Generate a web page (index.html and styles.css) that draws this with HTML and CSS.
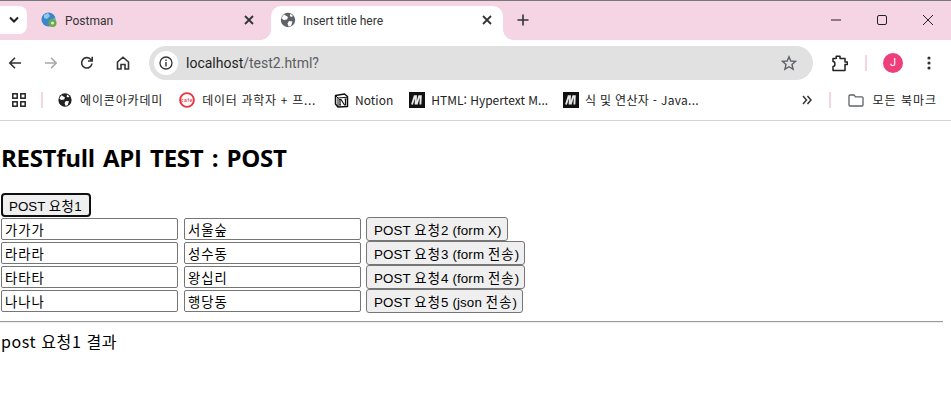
FILE: index.html
```html
<!DOCTYPE html>
<html lang="ko">
<head>
<meta charset="utf-8">
<title>Insert title here</title>
<link rel="stylesheet" href="styles.css">
</head>
<body>
<header class="browser">
  <div class="tabstrip">
    <button class="tabsearch" aria-label="tabs"><svg width="12" height="8" viewBox="0 0 12 8"><path d="M2 1.5 6 5.5 10 1.5" fill="none" stroke="#1f1f1f" stroke-width="2"/></svg></button>
    <div class="tab tab-idle">
      <svg class="favicon" width="16" height="16" viewBox="0 0 16 16"><circle cx="7.5" cy="7.5" r="7" fill="#3b86c9"/><path d="M3 3 7 1 9 4 6 7 3 6ZM10 8 14 6 15 9 12 13 9 12Z" fill="#8fc6ea"/><circle cx="11.5" cy="11" r="4" fill="#6aa84f"/><circle cx="11.5" cy="11" r="1.6" fill="#d9ecc6"/></svg>
      <span class="tab-title">Postman</span>
      <svg class="tab-x" width="10" height="10" viewBox="0 0 10 10"><path d="M1 1 9 9M9 1 1 9" stroke="#333" stroke-width="1.8"/></svg>
    </div>
    <div class="tab tab-active">
      <svg class="favicon" width="16" height="16" viewBox="0 0 16 16"><circle cx="8" cy="8" r="7.2" fill="#5f6368"/><path d="M4 2.5 8 5 7 7.5 3.5 8 1.5 6ZM9 9 12.5 9.5 11 14 8.5 14.5 7.5 11.5ZM10.5 1.8 13 4 11.5 5 9.8 4Z" fill="#fff"/></svg>
      <span class="tab-title">Insert title here</span>
      <svg class="tab-x" width="10" height="10" viewBox="0 0 10 10"><path d="M1 1 9 9M9 1 1 9" stroke="#333" stroke-width="1.8"/></svg>
    </div>
    <svg class="newtab" width="12" height="12" viewBox="0 0 12 12"><path d="M6 0.5V11.5M0.5 6H11.5" stroke="#333" stroke-width="1.6"/></svg>
    <div class="winctl">
      <svg width="12" height="12" viewBox="0 0 12 12"><path d="M1 6H11" stroke="#222" stroke-width="1"/></svg>
      <svg width="12" height="12" viewBox="0 0 12 12"><rect x="1.5" y="1.5" width="9" height="9" rx="1.5" fill="none" stroke="#222"/></svg>
      <svg width="12" height="12" viewBox="0 0 12 12"><path d="M1 1 11 11M11 1 1 11" stroke="#222"/></svg>
    </div>
  </div>
  <div class="toolbar">
    <div class="navbtns">
      <svg width="16" height="16" viewBox="0 0 16 16"><path d="M14 8H3M8 2.8 2.8 8 8 13.2" fill="none" stroke="#333" stroke-width="1.6"/></svg>
      <svg width="16" height="16" viewBox="0 0 16 16"><path d="M2 8H13M8 2.8 13.2 8 8 13.2" fill="none" stroke="#a8a8a8" stroke-width="1.6"/></svg>
      <svg width="16" height="16" viewBox="0 0 16 16"><path d="M13 8.5A5.2 5.2 0 1 1 11.6 4.2L13 5.6M13.2 1.8V6H9" fill="none" stroke="#333" stroke-width="1.6"/></svg>
      <svg width="16" height="16" viewBox="0 0 16 16"><path d="M2.5 7 8 2.2 13.5 7V14H10V9.5H6V14H2.5Z" fill="none" stroke="#333" stroke-width="1.6"/></svg>
    </div>
    <div class="omnibox">
      <span class="info"><svg width="14" height="14" viewBox="0 0 14 14"><circle cx="7" cy="7" r="6" fill="none" stroke="#333" stroke-width="1.3"/><path d="M7 6V10.5M7 3.4V5" stroke="#333" stroke-width="1.4"/></svg></span>
      <span class="url">localhost<span class="url-path">/test2.html?</span></span>
      <svg class="star" width="16" height="16" viewBox="0 0 16 16"><path d="M8 1.8 9.8 6 14.6 6.4 11 9.5 12.1 14.2 8 11.7 3.9 14.2 5 9.5 1.4 6.4 6.2 6Z" fill="none" stroke="#5f6368" stroke-width="1.4"/></svg>
    </div>
    <div class="toolright">
      <svg class="ext" width="16" height="17" viewBox="0 0 16 17"><path d="M1 3.5H4.2V1.2H8V3.5H13V7H15.5V9.5H13V15.5H1V11.5C3.6 11.5 3.6 6.5 1 6.5Z" fill="none" stroke="#222" stroke-width="1.5" stroke-linejoin="round"/></svg>
      <span class="sep sep-tool"></span>
      <span class="avatar">J</span>
      <svg class="dots" width="4" height="14" viewBox="0 0 4 14"><circle cx="2" cy="2" r="1.6" fill="#333"/><circle cx="2" cy="7" r="1.6" fill="#333"/><circle cx="2" cy="12" r="1.6" fill="#333"/></svg>
    </div>
  </div>
  <nav class="bookmarks">
    <svg class="apps" width="14" height="14" viewBox="0 0 14 14"><g fill="none" stroke="#222" stroke-width="1.5"><rect x=".8" y=".8" width="4.4" height="4.4"/><rect x="8.8" y=".8" width="4.4" height="4.4"/><rect x=".8" y="8.8" width="4.4" height="4.4"/><rect x="8.8" y="8.8" width="4.4" height="4.4"/></g></svg>
    <span class="sep sep-apps"></span>
    <span class="bm bm-1"><svg width="14" height="14" viewBox="0 0 16 16"><circle cx="8" cy="8" r="7.6" fill="#222"/><path d="M4 2.5 8 5 7 7.5 3.5 8 1.5 6ZM9 9 12.5 9.5 11 14 8.5 14.5 7.5 11.5ZM10.5 1.8 13 4 11.5 5 9.8 4Z" fill="#fff"/></svg>에이콘아카데미</span>
    <span class="bm bm-2"><svg width="16" height="16" viewBox="0 0 16 16"><circle cx="8" cy="8" r="6.9" fill="#fff" stroke="#e8343f" stroke-width="1.9"/><text class="cafe-mark" x="8" y="9.6" text-anchor="middle">cafe</text></svg>데이터 과학자 + 프...</span>
    <span class="bm bm-3"><svg width="15" height="15" viewBox="0 0 15 15"><path d="M1.5 2.5 10.5 1 13.5 3.5V13.5L4 14 1.5 11Z" fill="#fff" stroke="#111" stroke-width="1.5" stroke-linejoin="round"/><path d="M1.5 2.5 4 5 13.5 4.2M4 5V14" fill="none" stroke="#111" stroke-width="1"/><path d="M6 6.5V12M6 6.5H7L10.5 12H11.5V6M5 12H7M5 6.5H7M10.5 6H12.5" fill="none" stroke="#111" stroke-width="1.2"/></svg>Notion</span>
    <span class="bm bm-4"><span class="mdn"><svg width="16" height="16" viewBox="0 0 16 16"><rect width="16" height="16" fill="#111"/><path d="M3 12.5 5.6 4.2H7L6.6 12.5M7.6 12.5 10.2 4.2H11.8L11.4 12.5" fill="none" stroke="#e8e8e8" stroke-width="1.9"/></svg></span>HTML: Hypertext M...</span>
    <span class="bm bm-5"><span class="mdn"><svg width="16" height="16" viewBox="0 0 16 16"><rect width="16" height="16" fill="#111"/><path d="M3 12.5 5.6 4.2H7L6.6 12.5M7.6 12.5 10.2 4.2H11.8L11.4 12.5" fill="none" stroke="#e8e8e8" stroke-width="1.9"/></svg></span><span class="ko-mid">식 및 연산자 - Java...</span></span>
    <svg class="more" width="10" height="10" viewBox="0 0 10 10"><path d="M1 1 4.5 5 1 9M5.5 1 9 5 5.5 9" fill="none" stroke="#333" stroke-width="1.5"/></svg>
    <span class="sep sep-more"></span>
    <span class="bm bm-all"><svg width="16" height="13" viewBox="0 0 16 13"><path d="M1 2A1 1 0 0 1 2 1H6L7.5 2.8H14A1 1 0 0 1 15 3.8V11A1 1 0 0 1 14 12H2A1 1 0 0 1 1 11Z" fill="none" stroke="#5f6368" stroke-width="1.3"/></svg>모든 북마크</span>
  </nav>
</header>
<main class="page">
  <h1 class="title">RESTfull API TEST : POST</h1>
  <button class="btn btn-focus">POST <span class="ko">요청</span>1</button>
  <form class="row"><input class="field" value="가가가"><input class="field" value="서울숲"><button type="button" class="btn">POST <span class="ko">요청</span>2 (form X)</button></form>
  <form class="row"><input class="field" value="라라라"><input class="field" value="성수동"><button type="button" class="btn">POST <span class="ko">요청</span>3 (form <span class="ko">전송</span>)</button></form>
  <form class="row"><input class="field" value="타타타"><input class="field" value="왕십리"><button type="button" class="btn">POST <span class="ko">요청</span>4 (form <span class="ko">전송</span>)</button></form>
  <form class="row"><input class="field" value="나나나"><input class="field" value="행당동"><button type="button" class="btn">POST <span class="ko">요청</span>5 (json <span class="ko">전송</span>)</button></form>
  <hr class="rule">
  <div class="result">post 요청1 결과</div>
</main>
</body>
</html>
```
FILE: styles.css
```css
* { box-sizing: border-box; }
html, body { margin: 0; height: 100%; background: #fff; overflow: hidden; }
body { font-family: "Noto Sans CJK KR", "Noto Sans", sans-serif; color: #000; }
svg { display: block; flex: none; }

.browser { border-bottom: 1px solid #d3d3d3; height: 121px; }
.tabstrip { height: 40px; background: #f5d5e4; border-top: 1px solid #777; padding-top: 5px; display: flex; align-items: flex-start; position: relative; }
.tabsearch { width: 27px; height: 28px; margin: 0; padding: 0; border: 0; background: #fff; border-radius: 0 8px 8px 0; display: flex; align-items: center; justify-content: center; }
.tab { display: flex; align-items: center; font: 12px "Roboto", "Open Sans", sans-serif; color: #333; }
.tab-idle { width: 217px; margin-left: 14px; height: 28px; padding-right: 4px; }
.tab-active { width: 232px; height: 34px; margin-left: 13px; padding: 0 11px 6px 9px; background: #fff; border-radius: 10px 10px 0 0; position: relative; }
.tab-active::before, .tab-active::after { content: ""; position: absolute; bottom: 0; width: 10px; height: 10px; }
.tab-active::before { left: -10px; background: radial-gradient(circle at 0 0, #f5d5e4 9.5px, #fff 10px); }
.tab-active::after { right: -10px; background: radial-gradient(circle at 100% 0, #f5d5e4 9.5px, #fff 10px); }
.tab-title { margin-left: 8px; flex: 1; padding-top: 2px; }
.tab-active .tab-title { margin-left: 7px; }
.newtab { margin: 8px 0 0 14px; }
.winctl { margin: 8px 0 0 auto; display: flex; gap: 34px; padding-right: 17px; }

.toolbar { height: 40px; display: flex; align-items: flex-end; background: #fff; border-radius: 0 10px 0 0; padding-top: 6px; position: relative; margin-top: 0; }
.navbtns { display: flex; gap: 20px; padding-left: 7px; height: 34px; align-items: center; }
.omnibox { width: 664px; height: 34px; margin-left: 18px; background: #e1e1e1; border-radius: 17px; display: flex; align-items: center; padding: 0 16px 0 5px; }
.info { width: 24px; height: 24px; border-radius: 50%; background: #fff; display: flex; align-items: center; justify-content: center; }
.url { margin-left: 8px; flex: 1; font: 14px "Roboto", "Liberation Sans", sans-serif; color: #1f1f1f; }
.url-path { color: #5b5e62; }
.toolright { height: 34px; display: flex; align-items: center; padding-left: 19px; }
.sep { width: 2px; background: #f5d5e4; flex: none; height: 16px; }
.sep-tool { margin-left: 17px; }
.avatar { width: 20px; height: 20px; margin-left: 16px; border-radius: 50%; background: #ee3f7c; color: #fff; font: 11px/20px "Roboto", sans-serif; text-align: center; }
.dots { margin-left: 24px; }

.bookmarks { height: 40px; display: flex; align-items: center; font-size: 12px; color: #222; padding-left: 12px; }
.bm { display: flex; align-items: center; gap: 8px; white-space: nowrap; line-height: 16px; font-family: "Noto Sans CJK KR", sans-serif; }
.mdn { display: block; }
.cafe-mark { font: 700 4.5px "Liberation Sans", sans-serif; fill: #e8343f; }
.sep-apps { margin-left: 15px; }
.bm-1 { margin-left: 15px; letter-spacing: .85px; }
.bm-2 { margin-left: 16px; gap: 7px; letter-spacing: .7px; }
.bm-3 { margin-left: 18px; gap: 6px; }
.bm-4 { margin-left: 16px; gap: 6px; }
.bm-5 { margin-left: 15px; gap: 6px; }
.ko-mid { letter-spacing: .3px; }
.more { margin-left: auto; }
.sep-more { margin-left: 17px; }
.bm-all { margin-left: 17px; margin-right: 14px; letter-spacing: 1px; }

.page { padding: 0 8px 0 1px; }
.title { margin: 0; font-size: 24px; font-weight: 700; line-height: 36px; padding: 19px 0 0; height: 72px; font-family: "Open Sans", sans-serif; letter-spacing: -.3px; word-spacing: 2.4px; }
.btn { height: 24px; padding: 1px 5px 1px 7px; margin: 0; font: 13.33px "Liberation Sans", "Noto Sans CJK KR", sans-serif; letter-spacing: .12px; color: #000; background: #efefef; border: 1px solid #767676; border-radius: 3px; white-space: nowrap; display: block; }
.ko { letter-spacing: 1.1px; }
.btn-focus { width: 90px; border: 2px solid #101010; border-radius: 4px; padding: 0 0 0 6px; text-align: left; letter-spacing: 0; }
.btn-focus .ko { letter-spacing: .5px; }
.row { display: flex; align-items: center; height: 24px; margin: 0; }
.field { width: 177px; height: 22px; margin: 0 6px 0 0; padding: 1px 3px; font: 13.33px "Liberation Sans", "Noto Sans CJK KR", sans-serif; letter-spacing: 1px; color: #000; background: #fff; border: 1px solid #767676; border-radius: 2px; }
.field + .field { margin-right: 5px; }
.rule { margin: 8px 0 0 -1px; height: 2px; border: 0; border-top: 1px solid #9a9a9a; border-bottom: 1px solid #eee; }
.result { margin-top: 6px; font-size: 16px; line-height: 24px; letter-spacing: .6px; }
```
